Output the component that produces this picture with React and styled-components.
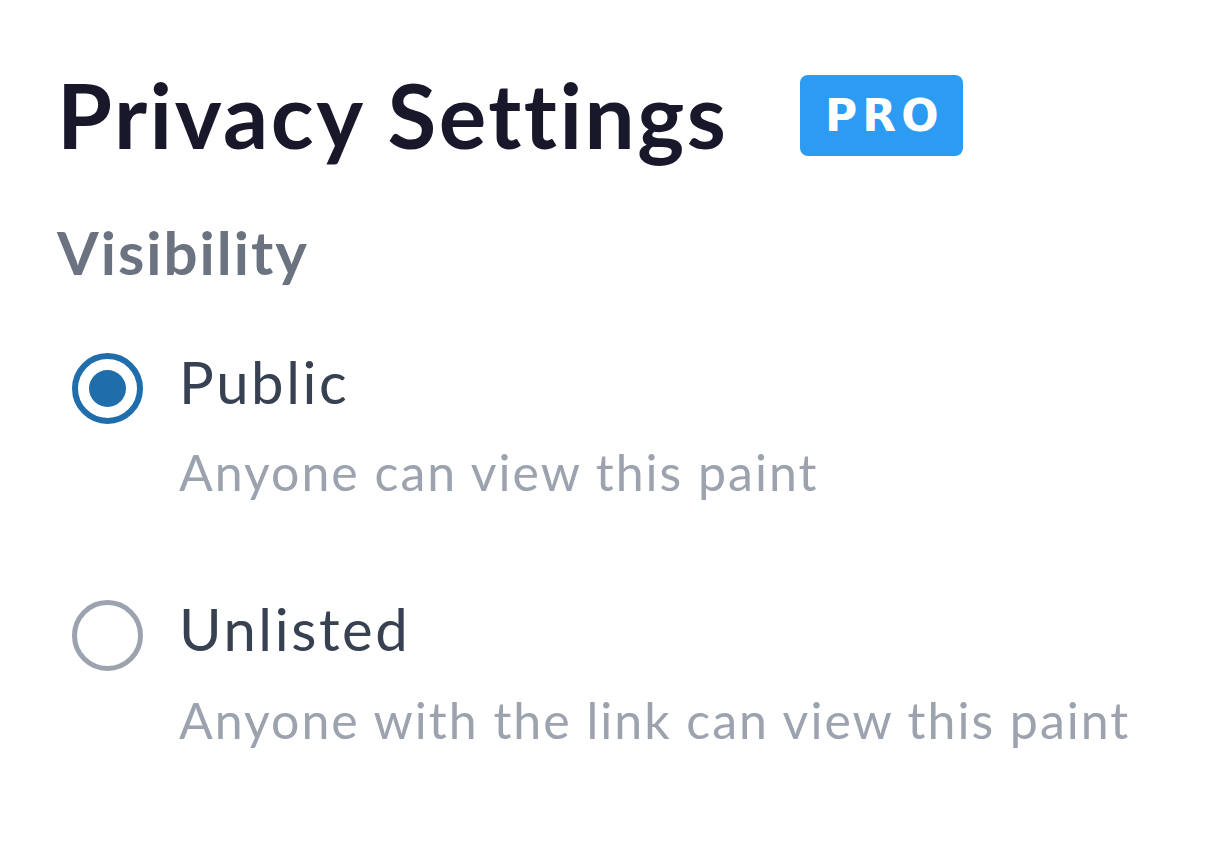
import React from "react";
import styled, { createGlobalStyle } from "styled-components";

const Global = createGlobalStyle`
  html, body { margin: 0; padding: 0; background: #ffffff; }
  body { font-family: Lato, "Noto Sans", sans-serif; }
`;

const Page = styled.div`
  padding: 62px 0 0 57px;
  display: flex;
  flex-direction: column;
`;

const TitleRow = styled.div`
  display: flex;
  align-items: center;
  gap: 72px;
`;

const Title = styled.h1`
  margin: 0;
  font-size: 89px;
  line-height: 1.2;
  font-weight: 700;
  letter-spacing: 2.5px;
  color: #19182a;
`;

const Badge = styled.span`
  display: inline-flex;
  align-items: center;
  justify-content: center;
  width: 163px;
  height: 81px;
  border-radius: 8px;
  background: #2b9cf2;
  color: #ffffff;
  font-family: "DejaVu Sans", Lato, sans-serif;
  font-size: 44px;
  font-weight: 700;
  letter-spacing: 5px;
  text-indent: 5px;
`;

const Section = styled.h2`
  margin: 47px 0 0;
  font-size: 60px;
  line-height: 1.2;
  font-weight: 700;
  letter-spacing: 2px;
  color: #6b7280;
`;

const Options = styled.div`
  display: flex;
  flex-direction: column;
  gap: 92px;
  margin-top: 59px;
`;

const Option = styled.label`
  display: grid;
  grid-template-columns: 71px 1fr;
  column-gap: 36px;
  padding-left: 15px;
`;

const Radio = styled.span`
  box-sizing: border-box;
  width: 71px;
  height: 71px;
  margin-top: 6px;
  border-radius: 50%;
  border: ${(p) => (p.$checked ? "6px solid #1f6dab" : "5px solid #9ca3af")};
  display: flex;
  align-items: center;
  justify-content: center;
  &::after {
    content: "";
    width: 37px;
    height: 37px;
    border-radius: 50%;
    background: ${(p) => (p.$checked ? "#1f6dab" : "transparent")};
  }
`;

const Texts = styled.div`
  display: flex;
  flex-direction: column;
  gap: 26px;
`;

const Label = styled.span`
  font-size: 58px;
  line-height: 1.2;
  letter-spacing: 2.6px;
  color: #374151;
`;

const Desc = styled.span`
  font-size: 50px;
  line-height: 1.2;
  letter-spacing: 2px;
  color: #9ca3af;
`;

const options = [
  { label: "Public", desc: "Anyone can view this paint", checked: true },
  { label: "Unlisted", desc: "Anyone with the link can view this paint", checked: false },
];

export default function App() {
  return (
    <>
      <Global />
      <Page>
        <TitleRow>
          <Title>Privacy Settings</Title>
          <Badge>PRO</Badge>
        </TitleRow>
        <Section>Visibility</Section>
        <Options>
          {options.map((o) => (
            <Option key={o.label}>
              <Radio $checked={o.checked} />
              <Texts>
                <Label>{o.label}</Label>
                <Desc>{o.desc}</Desc>
              </Texts>
            </Option>
          ))}
        </Options>
      </Page>
    </>
  );
}
